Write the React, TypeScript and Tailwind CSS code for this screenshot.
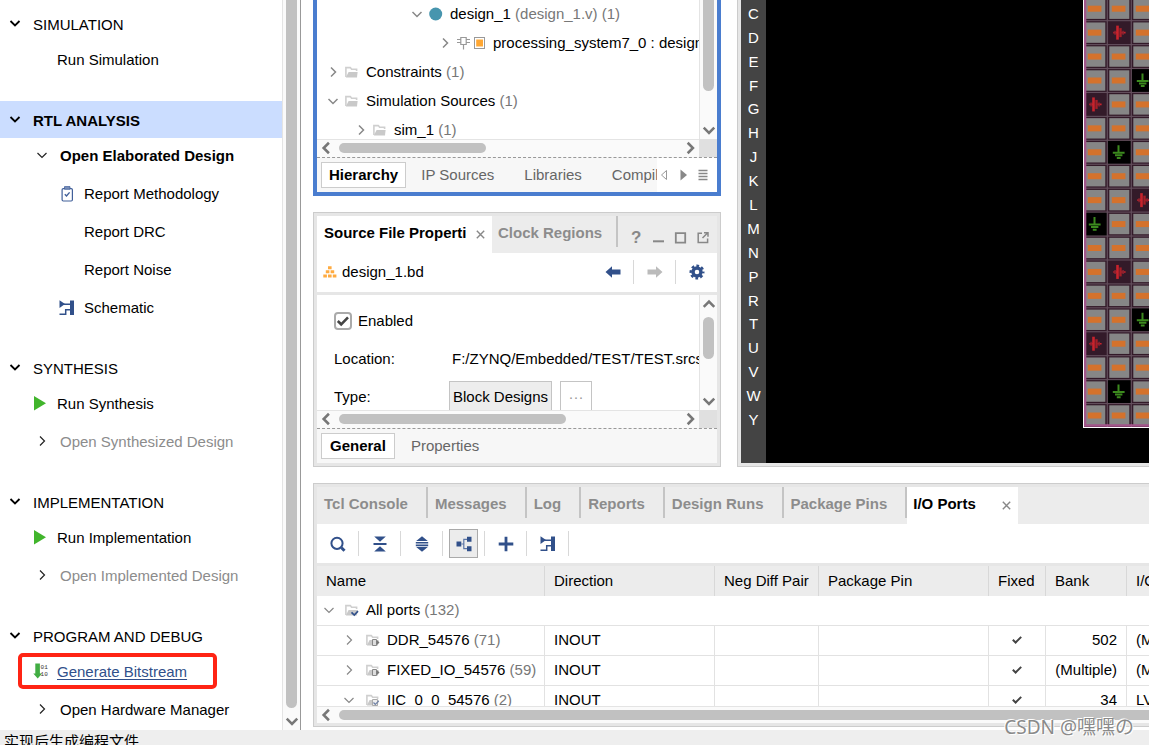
import React, { ReactNode } from 'react';
import clsx from 'clsx';

/* ---------- icons ---------- */

type ChevronProps = { dir: 'down' | 'right' | 'left' | 'up'; className?: string; size?: number; stroke?: number };

const chevronPaths = {
  down: 'M1.5 4 6 8.5 10.5 4',
  up: 'M1.5 8.5 6 4 10.5 8.5',
  right: 'M4 1.5 8.5 6 4 10.5',
  left: 'M8.5 1.5 4 6 8.5 10.5',
};

function Chevron({ dir, className, size = 12, stroke = 1.2 }: ChevronProps) {
  return (
    <svg width={size} height={size} viewBox="0 0 12 12" className={clsx('shrink-0', className)} fill="none" stroke="currentColor" strokeWidth={stroke}>
      <path d={chevronPaths[dir]} />
    </svg>
  );
}

function SchematicIcon() {
  return (
    <svg width="16" height="16" viewBox="0 0 16 16" className="shrink-0 text-[#31508a]" fill="currentColor">
      <path d="M0.5 0.3 6 4 0.5 8Z" />
      <path d="M11 0.5h4v14.5h-4z" />
      <path d="M3 4.3h8M0.5 14.3h6.2V9.8h5" fill="none" stroke="currentColor" strokeWidth="1.5" />
    </svg>
  );
}

function ClipboardIcon() {
  return (
    <svg width="16" height="16" viewBox="0 0 16 16" className="shrink-0" fill="none" stroke="#41609a">
      <rect x="3.1" y="2.6" width="10.3" height="12.4" rx="1.2" strokeWidth="1.2" />
      <path d="M5.5 0.6h5.5v2.6H5.5z" fill="#7d92ba" stroke="#41609a" strokeWidth="0.8" />
      <path d="M5.8 8.3 7.5 10 10.6 6.4" strokeWidth="1.4" />
    </svg>
  );
}

function PlayIcon() {
  return (
    <svg width="14" height="16" viewBox="0 0 14 16" className="shrink-0">
      <path d="M1 0 13 7.3 1 14.6Z" fill="#41b52c" />
    </svg>
  );
}

function BitstreamIcon() {
  return (
    <svg width="16" height="18" viewBox="0 0 16 18" className="shrink-0">
      <path d="M2.3 0.5h4.6v10h2.2L4.7 15.5 0.3 10.5h2z" fill="#41ad43" />
      <text x="7.6" y="6" fontSize="6" fill="#333" fontFamily="Liberation Mono, monospace">01</text>
      <text x="7.6" y="13" fontSize="6" fill="#333" fontFamily="Liberation Mono, monospace">10</text>
    </svg>
  );
}

function FolderIcon({ mark }: { mark?: 'check' | 'port' | 'edit' }) {
  return (
    <svg width="15" height="14" viewBox="0 0 15 14" className="shrink-0" fill="none">
      <path d="M0.9 12V2.6h4.4l1.3 1.6h5V6" stroke="#cfcfcf" strokeWidth="1.6" />
      <path d="M3.6 7h9L12 12.5H0.8z" fill="#c9c9c9" />
      {mark === 'check' && <path d="M6.5 9.3 9.3 12 13 8.2" stroke="#31508a" strokeWidth="1.7" />}
      {mark === 'port' && (
        <>
          <path d="M6.5 6.5h4v6h-4z" fill="#ddd" stroke="#888" />
          <path d="M10.5 7.5h1l2 2-2 2h-1z" fill="#777" />
        </>
      )}
      {mark === 'edit' && (
        <>
          <path d="M6.5 6.5h5v6h-5z" fill="#eee" stroke="#aaa" />
          <path d="M7.5 9.5 9.3 11.3 12.8 7.8" stroke="#6c7fa5" strokeWidth="1.2" />
        </>
      )}
    </svg>
  );
}

function InstanceIcon() {
  return (
    <svg width="15" height="14" viewBox="0 0 15 14" className="shrink-0" fill="none" stroke="#999" strokeWidth="1.2">
      <path d="M3.8 1.5h5.4v7H3.8zM6.5 8.5v5M0 3.5h3.8M0 6.5h3.8M9.2 3.5H13M9.2 6.5H13" />
    </svg>
  );
}

function BlockIcon() {
  return (
    <svg width="15" height="14" viewBox="0 0 15 14" className="shrink-0">
      <rect x="2.5" y="1.5" width="10" height="11" fill="#fff" stroke="#999" />
      <rect x="4.2" y="3.5" width="6.8" height="7" fill="#ffa733" />
    </svg>
  );
}

function ModuleIcon() {
  return (
    <svg width="15" height="14" viewBox="0 0 15 14" className="shrink-0">
      <circle cx="6.7" cy="7" r="6.5" fill="#4795ae" />
    </svg>
  );
}

function HierarchyIcon() {
  return (
    <svg width="14" height="12" viewBox="0 0 14 12" className="shrink-0" fill="#ffab40">
      <path d="M5 0.3h3.6v3H5zM2.8 4.3h3.6v2.9H2.8zM7.6 4.3h3.6v2.9H7.6zM0.3 8.4h3.6v3H0.3zM5 8.4h3.6v3H5zM9.8 8.4h3.6v3H9.8z" />
    </svg>
  );
}

function ArrowIcon({ dir }: { dir: 'left' | 'right' }) {
  return (
    <svg width="16" height="12" viewBox="0 0 16 12" fill="currentColor">
      {dir === 'left' ? <path d="M0.5 6 7 0.3V3.5h8.5v5H7v3.2z" /> : <path d="M15.5 6 9 0.3V3.5H0.5v5H9v3.2z" />}
    </svg>
  );
}

function GearIcon() {
  return (
    <svg width="16" height="16" viewBox="0 0 16 16" fill="none" stroke="#31508a">
      <circle cx="8" cy="8" r="4" strokeWidth="3.4" />
      <circle cx="8" cy="8" r="6.3" strokeWidth="2.4" strokeDasharray="2.7 2.248" strokeDashoffset="1.35" />
    </svg>
  );
}

/* ---------- scroll bars ---------- */

function ScrollArrow({ dir }: { dir: ChevronProps['dir'] }) {
  return (
    <span className="flex size-[18px] shrink-0 items-center justify-center">
      <Chevron dir={dir} size={14} stroke={2.2} />
    </span>
  );
}

function VScroll({ up, children }: { up?: boolean; children: ReactNode }) {
  return (
    <div className="flex w-[18px] shrink-0 flex-col items-center border-l border-[#e4e4e4] bg-[#fafafa] text-[#777]">
      {up && <ScrollArrow dir="up" />}
      <div className="min-h-0 w-full flex-1 px-[3px]">{children}</div>
      <ScrollArrow dir="down" />
    </div>
  );
}

function HScroll({ thumb }: { thumb: string }) {
  return (
    <div className="flex h-[18px] shrink-0">
      <div className="flex flex-1 items-center border-t border-[#e4e4e4] bg-[#fafafa] pb-px text-[#777]">
        <ScrollArrow dir="left" />
        <div className="flex flex-1 pl-1">
          <div className={clsx('h-[10px] rounded-full bg-[#c1c1c1]', thumb)} />
        </div>
        <ScrollArrow dir="right" />
      </div>
      <div className="w-[18px] bg-[#e0e0e0]" />
    </div>
  );
}

/* ---------- flow navigator ---------- */

type FlowItem = {
  label: string;
  kind: 'action' | 'open' | 'report';
  icon?: ReactNode;
  expanded?: boolean;
  disabled?: boolean;
  strong?: boolean;
  marked?: boolean;
};

const flow: { title: string; active?: boolean; items: FlowItem[] }[] = [
  { title: 'SIMULATION', items: [{ label: 'Run Simulation', kind: 'action' }] },
  {
    title: 'RTL ANALYSIS',
    active: true,
    items: [
      { label: 'Open Elaborated Design', kind: 'open', expanded: true, strong: true },
      { label: 'Report Methodology', kind: 'report', icon: <ClipboardIcon /> },
      { label: 'Report DRC', kind: 'report' },
      { label: 'Report Noise', kind: 'report' },
      { label: 'Schematic', kind: 'report', icon: <SchematicIcon /> },
    ],
  },
  {
    title: 'SYNTHESIS',
    items: [
      { label: 'Run Synthesis', kind: 'action', icon: <PlayIcon /> },
      { label: 'Open Synthesized Design', kind: 'open', disabled: true },
    ],
  },
  {
    title: 'IMPLEMENTATION',
    items: [
      { label: 'Run Implementation', kind: 'action', icon: <PlayIcon /> },
      { label: 'Open Implemented Design', kind: 'open', disabled: true },
    ],
  },
  {
    title: 'PROGRAM AND DEBUG',
    items: [
      { label: 'Generate Bitstream', kind: 'action', icon: <BitstreamIcon />, marked: true },
      { label: 'Open Hardware Manager', kind: 'open' },
    ],
  },
];

function FlowRow({ item }: { item: FlowItem }) {
  return (
    <li className="relative h-[38px]">
      <a
        href="#"
        className={clsx(
          'flex h-full items-center',
          item.kind === 'report' ? 'pl-[59px]' : 'pl-[33px]',
          item.strong && 'font-bold',
          item.disabled && 'text-[#8c8c8c]',
          item.marked && 'text-[#31508a] underline underline-offset-2',
        )}
      >
        {item.kind === 'open' ? (
          <span className="flex w-[27px] pb-[2px] pl-[3px] text-[#222]">
            <Chevron dir={item.expanded ? 'down' : 'right'} />
          </span>
        ) : (
          <span className={item.kind === 'report' ? 'w-[25px]' : 'w-6'}>{item.icon}</span>
        )}
        {item.label}
      </a>
      {item.marked && <span className="pointer-events-none absolute top-0 left-[18px] h-9 w-[199px] rounded-[5px] border-[4px] border-[#ff2414]" />}
    </li>
  );
}

function FlowNavigator() {
  return (
    <nav className="flex w-[301px] shrink-0 border-r border-[#999]">
      <div className="min-w-0 flex-1 overflow-hidden pt-[5px]">
        {flow.map((section) => (
          <section key={section.title} className="mb-[22px]">
            <h2 className={clsx('flex h-[37px] items-center gap-3 pl-[9px]', section.active && 'bg-[#cbddff] font-bold')}>
              <Chevron dir="down" stroke={1.8} className="mb-[2px]" />
              <span className="pt-[2px]">{section.title}</span>
            </h2>
            <ul className="-mt-px">
              {section.items.map((item) => (
                <FlowRow key={item.label} item={item} />
              ))}
            </ul>
          </section>
        ))}
      </div>
      <VScroll>
        <div className="h-[calc(100%-4px)] rounded-b-full bg-[#c1c1c1]" />
      </VScroll>
    </nav>
  );
}

/* ---------- sources ---------- */

function TreeRow({ indent, open, icon, name, note }: { indent: string; open?: boolean; icon: ReactNode; name: string; note?: string }) {
  return (
    <li className={clsx('flex h-[29px] items-center gap-[6px] whitespace-nowrap', indent)}>
      <Chevron dir={open ? 'down' : 'right'} className="text-[#888]" stroke={1.5} />
      <span className="flex">{icon}</span>
      <span>
        {name} {note && <span className="text-[#777]">{note}</span>}
      </span>
    </li>
  );
}

function SourcesPanel() {
  return (
    <section className="flex min-h-0 flex-1 flex-col border-4 border-t-0 border-[#4a7dcf]">
      <div className="flex min-h-0 flex-1">
        <ul className="-mt-px min-w-0 flex-1 overflow-hidden">
          <TreeRow indent="pl-[94px]" open icon={<ModuleIcon />} name="design_1" note="(design_1.v) (1)" />
          <TreeRow indent="pl-[122px]" icon={<><InstanceIcon /><BlockIcon /></>} name="processing_system7_0 : design" />
          <TreeRow indent="pl-[10px]" icon={<FolderIcon />} name="Constraints" note="(1)" />
          <TreeRow indent="pl-[10px]" open icon={<FolderIcon />} name="Simulation Sources" note="(1)" />
          <TreeRow indent="pl-[38px]" icon={<FolderIcon />} name="sim_1" note="(1)" />
        </ul>
        <VScroll>
          <div className="h-[75%] rounded-b-full bg-[#c1c1c1]" />
        </VScroll>
      </div>
      <HScroll thumb="w-[147px]" />
      <div className="flex h-[35px] shrink-0 border-t border-dashed border-[#999] bg-[#f7f7f7]">
        <div className="flex min-w-0 flex-1 items-center overflow-hidden pl-1 whitespace-nowrap text-[#666]">
          <button className="h-[26px] border border-[#ccc] bg-white px-[7px] font-bold text-black">Hierarchy</button>
          <button className="px-[15px]">IP Sources</button>
          <button className="px-[15px]">Libraries</button>
          <button className="pl-[15px]">Compil</button>
        </div>
        <div className="flex w-[60px] items-center bg-white">
          <svg width="60" height="14" viewBox="0 0 60 14" fill="none">
            <path d="M9.5 2.5v9L4.5 7z" stroke="#999" />
            <path d="M23.5 1.5v11L30 7z" fill="#888" />
            <path d="M41.5 2.5h9M41.5 5.5h9M41.5 8.5h9M41.5 11.5h9" stroke="#888" strokeWidth="1.6" />
          </svg>
        </div>
      </div>
    </section>
  );
}

/* ---------- source file properties ---------- */

function CloseIcon() {
  return (
    <svg width="9" height="9" viewBox="0 0 9 9" stroke="#888" strokeWidth="1.4" className="shrink-0">
      <path d="M0.8 0.8 8.2 8.2M8.2 0.8 0.8 8.2" />
    </svg>
  );
}

function PropertiesPanel() {
  return (
    <section className="flex h-[255px] shrink-0 flex-col border border-[#ccc] bg-[#e6e6e6] p-[3px]">
      <header className="flex h-[37px] shrink-0 bg-[#ececec] font-bold whitespace-nowrap">
        <button className="flex w-[175px] items-center bg-white pb-1 pl-[7px]">
          <span className="w-[152px] text-left">Source File Properti</span>
          <span className="pt-1"><CloseIcon /></span>
        </button>
        <button className="mb-[6px] w-[126px] border-r-2 border-[#c4c4c4] pt-[2px] pl-[6px] text-left text-[#8c8c8c]">Clock Regions</button>
        <svg width="92" height="37" viewBox="0 0 92 37" fill="none" stroke="#888" strokeWidth="1.8">
          <text x="13" y="27" fontSize="17" fill="#888" stroke="none">?</text>
          <path d="M35 25.3h11" strokeWidth="2" />
          <path d="M57.8 17.2h9.4v9.4h-9.4z" strokeWidth="1.8" />
          <path d="M84 17.2h-3.8v9.4h9.4v-4M84.5 22l4.5-4.5M86 16.8h4v4" strokeWidth="1.5" />
        </svg>
      </header>
      <div className="flex h-[39px] shrink-0 items-center bg-white pb-px pl-[6px]">
        <HierarchyIcon />
        <span className="flex-1 pl-[5px]">design_1.bd</span>
        <button aria-label="Previous" className="flex h-6 w-[42px] items-center justify-center border-r border-[#d8d8d8] text-[#31508a]"><ArrowIcon dir="left" /></button>
        <button aria-label="Next" className="flex h-6 w-[42px] items-center justify-center border-r border-[#d8d8d8] text-[#bbb]"><ArrowIcon dir="right" /></button>
        <button aria-label="Settings" className="flex h-6 w-[41px] items-center justify-center"><GearIcon /></button>
      </div>
      <div className="mt-[3px] flex min-h-0 flex-1 bg-white">
        <div className="min-w-0 flex-1 overflow-hidden pt-[7px] pl-[17px] whitespace-nowrap">
          <label className="flex h-[38px] items-center gap-[6px]">
            <span className="relative flex">
              <input type="checkbox" defaultChecked className="size-[18px] appearance-none rounded-[4px] border-2 border-[#aaa] bg-white" />
              <svg width="18" height="18" viewBox="0 0 18 18" className="pointer-events-none absolute inset-0" fill="none" stroke="#444" strokeWidth="2.6">
                <path d="M3.8 9 7.2 12.3 14 5.4" />
              </svg>
            </span>
            Enabled
          </label>
          <div className="flex h-[38px] items-center">
            <span className="w-[118px] shrink-0">Location:</span>
            <span>F:/ZYNQ/Embedded/TEST/TEST.srcs</span>
          </div>
          <div className="flex h-[38px] items-center">
            <span className="w-[115px] shrink-0">Type:</span>
            <button className="h-8 w-[103px] border border-[#c4c4c4] bg-[#ededed]">Block Designs</button>
            <button className="ml-2 h-8 w-8 border border-[#c4c4c4] bg-white text-[#999]">···</button>
          </div>
        </div>
        <VScroll up>
          <div className="mt-1 h-[42px] rounded-full bg-[#c1c1c1]" />
        </VScroll>
      </div>
      <HScroll thumb="w-[227px]" />
      <div className="flex h-[35px] shrink-0 items-center border-t border-dashed border-[#999] bg-[#f7f7f7] pl-1 text-[#666]">
        <button className="h-[26px] border border-[#ccc] bg-white px-2 font-bold text-black">General</button>
        <button className="px-4">Properties</button>
      </div>
    </section>
  );
}

/* ---------- package view ---------- */

const bankRows = 'CDEFGHJKLMNPRTUVWY'.split('');
const pinCols = Array.from({ length: 20 }, (_, i) => i);
const ROW_PITCH = 23.93;

function PinCell({ row, col }: { row: number; col: number }) {
  const phase = (row + 3 * col) % 10;
  const x = 0.3 + col * 24;
  const y = -3.3 + row * ROW_PITCH;
  return (
    <g transform={`translate(${x} ${y})`}>
      <rect x="0.6" y="0.6" width="22.8" height="22.8" fill={phase === 9 ? '#000' : '#331a29'} />
      {phase === 4 && (
        <>
          <path d="M6 12h4M14 12h4.3" stroke="#c8232c" strokeWidth="1.6" />
          <path d="M10.2 5v14" stroke="#c8232c" strokeWidth="2.6" />
          <path d="M13.2 7.5v9" stroke="#a51f28" strokeWidth="2.4" />
          <path d="M7.8 10v4M15.8 10v4" stroke="#8a2230" strokeWidth="1.6" />
        </>
      )}
      {phase === 9 && <path d="M11.2 5v7M5.5 12.4h11.8M7.7 15h7.4M9.5 17.6h3.8" stroke="#3c8a1e" strokeWidth="2" />}
      {phase !== 4 && phase !== 9 && (
        <>
          <rect x="2" y="1.8" width="20" height="20.4" fill="#868686" />
          <rect x="4.5" y="9" width="13.6" height="6" fill="#d4722c" />
        </>
      )}
    </g>
  );
}

function PackageView() {
  return (
    <section className="flex min-w-0 flex-1 border-b border-l border-[#ccc]">
      <div className="flex min-w-0 flex-1 overflow-hidden border-b-[3px] border-l-[3px] border-[#e6e6e6] bg-black">
        <div className="w-[25px] shrink-0 bg-[#444] pt-[2px] text-white">
          <ol className="grid h-[430px] auto-rows-fr">
            {bankRows.map((r) => (
              <li key={r} className="flex items-center justify-center">{r}</li>
            ))}
          </ol>
        </div>
        <svg width="484" height="428" viewBox="0 0 484 428" className="ml-[317px] shrink-0">
          <rect width="484" height="428" fill="#fff" />
          <rect x="1" width="482" height="427" fill="#a2568a" />
          <rect x="3" width="478" height="424" fill="#634e5c" />
          {bankRows.map((_, row) => pinCols.map((col) => <PinCell key={`${row}-${col}`} row={row} col={col} />))}
          <path d="M2 0v425.5h480V0" fill="none" stroke="#a2568a" strokeWidth="2.6" />
          <path d="M0.5 0v427.5h483" fill="none" stroke="#fff" />
        </svg>
      </div>
    </section>
  );
}

/* ---------- i/o ports ---------- */

const consoleTabs = ['Tcl Console', 'Messages', 'Log', 'Reports', 'Design Runs', 'Package Pins'];

const tools: { name: string; active?: boolean; icon: ReactNode }[] = [
  {
    name: 'Search',
    icon: (
      <>
        <circle cx="7" cy="7.3" r="5.6" fill="none" stroke="#31508a" strokeWidth="2" />
        <path d="M11.5 11.8 14.5 14.8" stroke="#31508a" strokeWidth="3" />
      </>
    ),
  },
  {
    name: 'Collapse all',
    icon: <path d="M2.2 0.5h11.6L8 5.7zM2.2 15.5h11.6L8 10.3zM1.5 7h13v2h-13z" fill="#31508a" />,
  },
  {
    name: 'Expand all',
    icon: <path d="M8 0.3 13.8 5H2.2zM8 15.7 13.8 11H2.2zM1.8 6h12.4v1.6H1.8zM1.8 8.6h12.4v1.6H1.8z" fill="#31508a" />,
  },
  {
    name: 'Group by interface',
    active: true,
    icon: (
      <>
        <path d="M0.5 5.5h4.8v5H0.5zM11 0.8h4.5v5H11zM11 10.2h4.5v5H11z" fill="#31508a" />
        <path d="M5.3 8H8M11 3.3H7.8v9.4H11" fill="none" stroke="#5c76a6" strokeWidth="1.2" />
      </>
    ),
  },
  { name: 'Create port', icon: <path d="M6.6 0.7h2.8v5.9h5.9v2.8H9.4v5.9H6.6V9.4H0.7V6.6h5.9z" fill="#31508a" /> },
  { name: 'Schematic', icon: null },
];

type Port = { name: string; count: number; open?: boolean; bank: string; std: string };

const ports: Port[] = [
  { name: 'DDR_54576', count: 71, bank: '502', std: '(Multiple)*' },
  { name: 'FIXED_IO_54576', count: 59, bank: '(Multiple)', std: '(Multiple)*' },
  { name: 'IIC_0_0_54576', count: 2, open: true, bank: '34', std: 'LVCMOS33*' },
];

const cell = 'h-[30px] overflow-hidden border-r border-b border-[#e2e2e2] px-[9px] pb-[2px]';
const head = 'h-[30px] border-r border-[#d8d8d8] pl-[9px] text-left font-normal';

function PortsPanel() {
  return (
    <section className="mt-4 ml-3 flex h-[244px] shrink-0 flex-col border-y border-l border-[#ccc] bg-[#e6e6e6] py-[3px] pl-[3px]">
      <header className="flex h-[37px] shrink-0 bg-[#ececec] font-bold whitespace-nowrap text-[#8c8c8c]">
        {consoleTabs.map((tab) => (
          <button key={tab} className="mb-[6px] border-r-2 border-[#c4c4c4] pt-[2px] pr-[18px] pl-[7px]">{tab}</button>
        ))}
        <button className="flex w-[111px] items-center justify-between bg-white pr-[7px] pb-1 pl-[6px] text-black">
          I/O Ports
          <span className="pt-1"><CloseIcon /></span>
        </button>
      </header>
      <div className="flex h-[39px] shrink-0 items-center bg-white">
        {tools.map((tool) => (
          <div key={tool.name} className="flex h-[25px] w-[42px] items-center justify-center border-r border-[#d8d8d8]">
            <button
              aria-label={tool.name}
              className={clsx('flex size-[29px] shrink-0 items-center justify-center', tool.active && 'border border-[#aaa] bg-[#ececec]')}
            >
              {tool.icon ? (
                <svg width="16" height="16" viewBox="0 0 16 16">
                  {tool.icon}
                </svg>
              ) : (
                <SchematicIcon />
              )}
            </button>
          </div>
        ))}
      </div>
      <div className="mt-[3px] min-h-0 flex-1 overflow-hidden bg-white">
        <table className="w-full table-fixed border-separate border-spacing-0 whitespace-nowrap">
          <thead className="bg-[#ececec]">
            <tr>
              <th className={clsx(head, 'w-[228px]')}>Name</th>
              <th className={clsx(head, 'w-[170px]')}>Direction</th>
              <th className={clsx(head, 'w-[104px]')}>Neg Diff Pair</th>
              <th className={clsx(head, 'w-[170px]')}>Package Pin</th>
              <th className={clsx(head, 'w-[57px]')}>Fixed</th>
              <th className={clsx(head, 'w-[81px]')}>Bank</th>
              <th className="h-[30px] pl-[9px] text-left font-normal">I/O Std</th>
            </tr>
          </thead>
          <tbody>
            <tr>
              <td colSpan={7} className="h-[30px] border-b border-[#e2e2e2] pb-[2px] pl-[6px]">
                <span className="flex items-center">
                  <Chevron dir="down" className="mr-[10px] text-[#888]" />
                  <FolderIcon mark="check" />
                  <span className="pl-[6px]">All ports <span className="text-[#777]">(132)</span></span>
                </span>
              </td>
            </tr>
            {ports.map((port) => (
              <tr key={port.name}>
                <td className="h-[30px] border-r border-b border-[#e2e2e2] pb-[2px] pl-[26px]">
                  <span className="flex items-center">
                    <Chevron dir={port.open ? 'down' : 'right'} className="mr-[11px] text-[#888]" />
                    <FolderIcon mark={port.open ? 'edit' : 'port'} />
                    <span className="pl-[6px]">{port.name} <span className="text-[#777]">({port.count})</span></span>
                  </span>
                </td>
                <td className={cell}>INOUT</td>
                <td className={cell} />
                <td className={cell} />
                <td className={cell}>
                  <svg width="10" height="9" viewBox="0 0 10 9" className="mx-auto" fill="none" stroke="#444" strokeWidth="2">
                    <path d="M0.8 4.8 3.6 7.5 9.2 1.9" />
                  </svg>
                </td>
                <td className={clsx(cell, 'text-right')}>{port.bank}</td>
                <td className="h-[30px] border-b border-[#e2e2e2] pb-[2px] pl-[9px]">{port.std}</td>
              </tr>
            ))}
          </tbody>
        </table>
      </div>
      <div className="flex h-[17px] shrink-0 items-center border-t border-[#e4e4e4] bg-[#fafafa] pb-px text-[#777]">
        <ScrollArrow dir="left" />
        <div className="ml-1 h-[10px] flex-1 rounded-l-full bg-[#c1c1c1]" />
      </div>
    </section>
  );
}

function App() {
  return (
    <div className="relative flex h-screen flex-col overflow-hidden bg-white font-['Liberation_Sans','Noto_Sans_CJK_SC',sans-serif] text-[15px] leading-[18px] text-black">
      <div className="flex min-h-0 flex-1">
        <FlowNavigator />
        <main className="flex min-w-0 flex-1 flex-col pb-[3px]">
          <div className="flex min-h-0 flex-1 gap-4 pl-3">
            <div className="flex w-[408px] shrink-0 flex-col gap-4">
              <SourcesPanel />
              <PropertiesPanel />
            </div>
            <PackageView />
          </div>
          <PortsPanel />
        </main>
      </div>
      <footer className="h-[15px] shrink-0 overflow-hidden bg-[#eee] pl-1 leading-6">实现后生成编程文件</footer>
      <div className="pointer-events-none absolute right-[15px] bottom-[6px] font-['Noto_Sans','Noto_Sans_CJK_SC',sans-serif] text-[19px] leading-6 text-[#8a8a8a] [text-shadow:1px_1px_0_#fff,-1px_-1px_0_#fff]">
        CSDN @嘿嘿の
      </div>
    </div>
  );
}

export default App;
